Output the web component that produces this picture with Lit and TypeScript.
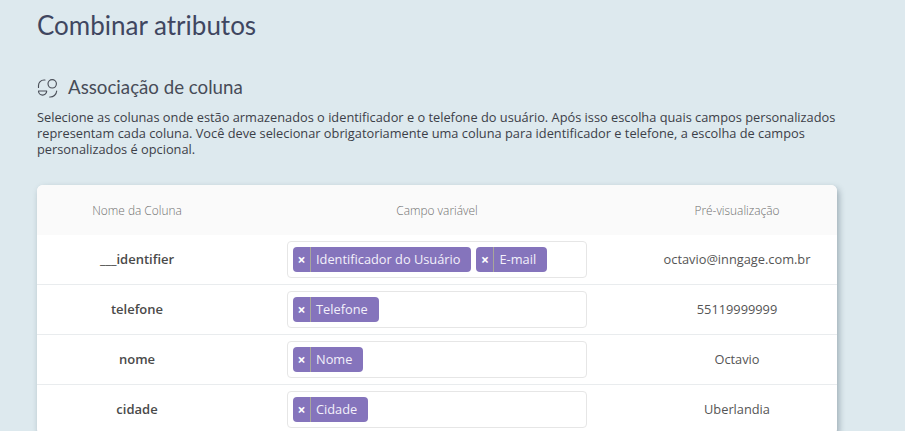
import { LitElement, html, css } from "lit";
import { customElement } from "lit/decorators.js";

const rows = [
  { name: "___identifier", tags: ["Identificador do Usuário", "E-mail"], preview: "octavio@inngage.com.br" },
  { name: "telefone", tags: ["Telefone"], preview: "55119999999" },
  { name: "nome", tags: ["Nome"], preview: "Octavio" },
  { name: "cidade", tags: ["Cidade"], preview: "Uberlandia" },
];

@customElement("app-root")
export class AppRoot extends LitElement {
  static styles = css`
    :host {
      display: block;
      height: 431px;
      overflow: hidden;
      background: #dde9ee;
      font-family: "Open Sans", sans-serif;
      color: #3a3f4b;
    }
    .page {
      width: 800px;
      padding: 9px 0 0 37px;
    }
    h1 {
      margin: 0;
      font: 400 26px/32px Lato, sans-serif;
      color: #3f4660;
    }
    .section {
      display: flex;
      align-items: center;
      gap: 9px;
      margin-top: 31px;
      height: 30px;
    }
    .section svg { display: block; }
    h2 {
      margin: 0;
      font: 400 18.7px/30px Lato, sans-serif;
      color: #474c58;
    }
    p {
      margin: 6.5px 0 0;
      width: 800px;
      font-size: 12.8px;
      line-height: 16.4px;
      color: #3c4048;
    }
    .card {
      margin-top: 27.3px;
      background: #fff;
      border-radius: 6px;
      box-shadow: 2px 3px 6px rgba(60, 80, 95, 0.4);
      overflow: hidden;
    }
    .row {
      display: grid;
      grid-template-columns: 200px 400px 200px;
      align-items: center;
      height: 49px;
      border-bottom: 1px solid #e9ecee;
      font-size: 12.8px;
      text-align: center;
    }
    .head {
      height: 50px;
      border-bottom: 0;
      background: #fafafa;
      font-size: 11.9px;
      font-weight: 300;
      color: #707070;
    }
    .name { font-size: 13px; font-weight: 600; color: #4a4a4a; padding-bottom: 2px; }
    .preview { color: #555; padding-bottom: 2px; }
    .box {
      display: flex;
      justify-self: center;
      gap: 5px;
      width: 300px;
      height: 37px;
      box-sizing: border-box;
      padding: 5px;
      border: 1px solid #e6e6e6;
      border-radius: 4px;
    }
    .tag {
      display: flex;
      align-items: center;
      height: 25px;
      background: #8574bc;
      border-radius: 4px;
      color: #f3f0fa;
      font-size: 12.8px;
    }
    .x {
      width: 17px;
      height: 100%;
      display: flex;
      align-items: center;
      justify-content: center;
      border-right: 1px solid #a8a69a;
      color: #fff;
      font-size: 14px;
      font-weight: 700;
    }
    .label { padding: 0 11px 2px 5px; }
  `;

  render() {
    return html`<div class="page">
      <h1>Combinar atributos</h1>
      <div class="section">
        <svg width="22" height="22" viewBox="0 0 22 22" fill="none" stroke="#4a4f58" stroke-width="1.15" stroke-linecap="round">
          <circle cx="15.200" cy="7.800" r="4.200" />
          <path d="M1.500 11.500V9.500a5.500 5.500 0 0 1 5.500-5.500h1M1.500 15h8.200M1.500 15a4.100 4.100 0 0 0 8.200 0M19.700 15a6.500 6.500 0 0 1-7 6" />
        </svg>
        <h2>Associação de coluna</h2>
      </div>
      <p>Selecione as colunas onde estão armazenados o identificador e o telefone do usuário. Após isso escolha quais campos personalizados representam cada coluna. Você deve selecionar obrigatoriamente uma coluna para identificador e telefone, a escolha de campos personalizados é opcional.</p>
      <div class="card">
        <div class="row head"><div>Nome da Coluna</div><div>Campo variável</div><div>Pré-visualização</div></div>
        ${rows.map(
          (r) => html`<div class="row">
            <div class="name">${r.name}</div>
            <div class="box">
              ${r.tags.map((t) => html`<span class="tag"><span class="x">×</span><span class="label">${t}</span></span>`)}
            </div>
            <div class="preview">${r.preview}</div>
          </div>`
        )}
      </div>
    </div>`;
  }
}
